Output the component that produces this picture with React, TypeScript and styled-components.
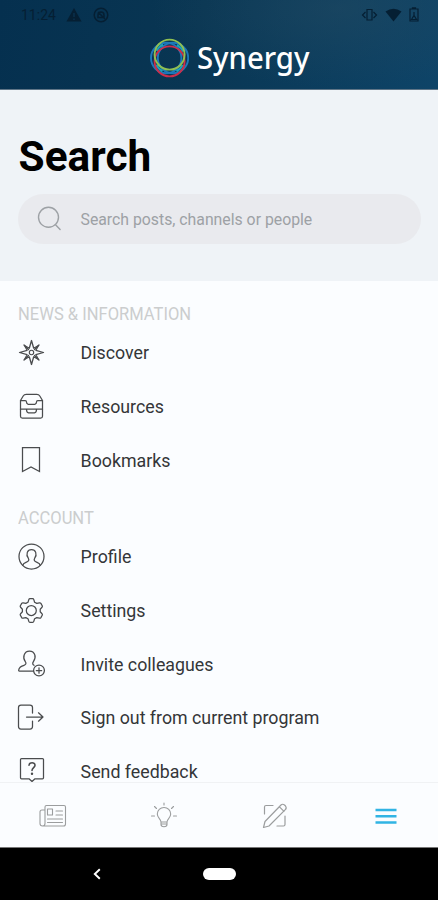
import React from "react";
import styled, { createGlobalStyle } from "styled-components";

const GlobalStyle = createGlobalStyle`
  * { box-sizing: border-box; }
  html, body { margin: 0; padding: 0; }
  body { font-family: Roboto, "Liberation Sans", sans-serif; background: #000; }
  svg { display: block; flex: none; }
`;

const Screen = styled.div`
  width: 100%;
  height: 900px;
  display: flex;
  flex-direction: column;
  overflow: hidden;
  background: #fbfdff;
`;

const Header = styled.header`
  height: 90px;
  flex: none;
  border-bottom: 1px solid #5f7587;
  background: radial-gradient(ellipse 190px 80px at 340px 8px, rgba(36, 75, 98, 0.5), rgba(36, 75, 98, 0)),
    linear-gradient(100deg, #05304f 0%, #093653 45%, #0e4468 100%);
`;

const StatusBar = styled.div`
  height: 29px;
  display: flex;
  justify-content: space-between;
  padding: 0 19px 0 21px;
  color: #051f33;
`;

const StatusGroup = styled.div<{ $gap: number }>`
  display: flex;
  align-items: center;
  gap: ${(p) => p.$gap}px;
`;

const Clock = styled.span`
  width: 34px;
  font-size: 14px;
  white-space: nowrap;
`;

const Brand = styled.div`
  height: 58px;
  display: flex;
  align-items: center;
  padding-left: 149px;
  gap: 8px;
`;

const BrandName = styled.span`
  font-family: "Noto Sans", "Open Sans", sans-serif;
  font-size: 31.5px;
  line-height: 40px;
  font-weight: 500;
  color: #fff;
  transform: translateY(-1px) scaleX(0.93);
  transform-origin: left center;
`;

const SearchPanel = styled.section`
  height: 191px;
  flex: none;
  padding: 42px 17px 0 18px;
  background: #eff3f7;
`;

const Title = styled.h1`
  margin: 0;
  padding-left: 0.6px;
  font-size: 42.4px;
  line-height: 50px;
  font-weight: 700;
  color: #000;
`;

const SearchField = styled.div`
  height: 50px;
  margin-top: 12px;
  display: flex;
  align-items: center;
  gap: 18.5px;
  padding-left: 18px;
  border-radius: 25px;
  background: #e9eaee;
  color: #9da1a5;
  font-size: 15.8px;
`;

const SearchHint = styled.span`
  line-height: 20px;
  padding-top: 2px;
`;

const Menu = styled.main`
  flex: 1;
  min-height: 0;
  overflow: hidden;
  display: flex;
  flex-direction: column;
  gap: 19.2px;
  padding-top: 21.2px;
`;

const Group = styled.section`
  flex: none;
`;

const GroupTitle = styled.h2`
  margin: 0 0 0 18px;
  height: 24px;
  font-size: 18.6px;
  line-height: 24px;
  font-weight: 400;
  color: #cbcdce;
  white-space: nowrap;
  transform: scaleX(0.89);
  transform-origin: left center;
`;

const MenuRow = styled.div`
  height: 53.6px;
  display: flex;
  align-items: center;
  gap: 35.6px;
  padding-left: 17px;
  color: #4a4c4e;
`;

const MenuLabel = styled.span`
  font-size: 17.8px;
  line-height: 24px;
  padding-top: 1px;
  color: #343638;
  white-space: nowrap;
`;

const TabBar = styled.nav`
  height: 65px;
  flex: none;
  display: grid;
  grid-template-columns: repeat(4, 111px);
  margin-left: -3px;
  padding-top: 2px;
  border-top: 1px solid #f0f2f4;
  background: #fbfdff;
`;

const Tab = styled.div<{ $active?: boolean }>`
  display: flex;
  align-items: center;
  justify-content: center;
  color: ${(p) => (p.$active ? "#31b4e4" : "#9b9d9e")};
`;

const SystemBar = styled.footer`
  height: 53px;
  flex: none;
  display: grid;
  grid-template-columns: 194px 50px 194px;
  align-items: center;
  justify-items: center;
  border-top: 1px solid #777;
  background: #000;
`;

const HomePill = styled.div`
  width: 33px;
  height: 12px;
  border-radius: 6px;
  background: #fff;
`;

const LineIcon = ({ children, size = 28, width = 1.25 }: { children: React.ReactNode; size?: number; width?: number }) => (
  <svg width={size} height={size} viewBox={`0 0 ${size} ${size}`} fill="none" stroke="currentColor" strokeWidth={width} strokeLinecap="round" strokeLinejoin="round">
    {children}
  </svg>
);

const CompassStar = () => (
  <LineIcon width={1.3}>
    <path d="M14.5 1.500 16.700 9.200 21.500 6.500 18.900 11.300 26.500 13.500 18.900 15.700 21.500 20.500 16.700 17.800 14.500 25.500 12.300 17.800 7.500 20.500 10.100 15.700 2.500 13.500 10.100 11.300 7.500 6.500 12.300 9.200Z" />
    <path d="m7 6 4.500 4.500M22 6l-4.500 4.500M7 21l4.500-4.500M22 21l-4.500-4.500" strokeWidth="1.300" />
    <circle cx="14.500" cy="13.500" r="2.200" strokeWidth="1.100" />
  </LineIcon>
);

const Drawer = () => (
  <LineIcon>
    <path d="M3.500 7.500v15.700q0 1.800 1.800 1.800h18.400q1.800 0 1.800-1.800V7.500L22.800 3q-1-1.700-3-1.700H9.200Q7.200 1.300 6.200 3Z" />
    <path d="M3.500 7.500h4.700q1.300 0 1.300 1.500t1.500 2.300h7q1.500-.8 1.500-2.300t1.300-1.500h4.700" />
    <path d="M3.500 16.200h22M9.500 16.500q0 3 2 3.300h6q2-.3 2-3.300" />
  </LineIcon>
);

const Bookmark = () => (
  <LineIcon>
    <path d="M5.500 1.500h17v24L14 21 5.500 25.500Z" strokeLinejoin="miter" />
  </LineIcon>
);

const Profile = () => (
  <LineIcon>
    <circle cx="14.500" cy="13.500" r="12.500" />
    <path d="M5.800 22.300c.5-2.800 3.500-2.600 5.200-4 .9-.8 1.200-1.800.3-3.100-1.400-1.800-1.700-3.800-1-5.800.6-1.700 2.200-2.800 4.200-2.800s3.600 1.100 4.200 2.800c.7 2 .4 4-1 5.800-.9 1.300-.6 2.300.3 3.100 1.700 1.400 4.700 1.200 5.200 4" />
  </LineIcon>
);

const Gear = () => (
  <LineIcon>
    <path d="M13 1.600h2.600q.9 0 1.200 1l.8 2.600 2.200 1.200 2.600-.6q1-.2 1.500.6l1.300 2.300q.5.800-.2 1.600L23.200 12.200v2.600l1.800 1.900q.7.800.2 1.600l-1.300 2.300q-.5.800-1.500.6l-2.600-.6-2.200 1.200-.8 2.600q-.3 1-1.200 1H13q-.9 0-1.200-1L11 21.800l-2.200-1.200-2.600.6q-1 .2-1.500-.6l-1.300-2.300q-.5-.8.2-1.600l1.800-1.900v-2.600L3.600 10.300q-.7-.8-.2-1.600L4.700 6.400q.5-.8 1.500-.6l2.600.6L11 5.200l.8-2.600q.3-1 1.200-1Z" />
    <circle cx="14.300" cy="13.500" r="5" />
  </LineIcon>
);

const Invite = () => (
  <LineIcon>
    <path d="M16.500 21.200H2.500Q1.300 21.200 1.800 19.500C2.400 17 4.500 16 7 15.300c2-.6 2.500-2 1.300-3.600C6.500 9.300 6.500 6.800 7.200 4.800 8 2.300 10 1 12.500 1s4.500 1.300 5.300 3.800c.7 2 .2 4.500-1.400 6.900-1.100 1.600-.8 2.700.6 3.600" />
    <circle cx="22" cy="20.500" r="5.400" />
    <path d="M22 17.800v5.400M19.300 20.500h5.400" />
  </LineIcon>
);

const SignOut = () => (
  <LineIcon>
    <path d="M15.500 9V3.500q0-2.500-2.500-2.500H4Q1.500 1 1.500 3.500v19Q1.500 25 4 25h9q2.500 0 2.500-2.500V17" />
    <path d="M9.500 13h16.500M21.500 8.800l4.500 4.200-4.500 4.200" />
  </LineIcon>
);

const Feedback = () => (
  <LineIcon>
    <path d="M4.500 1.500h21Q26.500 1.500 26.500 2.500v18.300Q26.500 21.800 25.500 21.800h-7.500L15 24.500 12 21.800H4.500q-1 0-1-1V2.500Q3.500 1.500 4.500 1.500Z" />
    <path d="M12 8.300c.2-3.400 6-3.500 6 0 0 2.200-3 2.500-3 5.200" strokeWidth="1.600" />
    <circle cx="15" cy="16.800" r=".6" fill="currentColor" />
  </LineIcon>
);

const News = () => (
  <LineIcon width={1.1}>
    <path d="M4 24H24.500q2 0 2-2V5q0-1.500-1.500-1.500H7.500Q6 3.500 6 5v16.500Q6 24 3.500 24 1 24 1 21.500V10q0-2 2-2h3" />
    <path d="M8.500 7h5v6h-5ZM17 9h6.500M17 13h6.500M8.500 17h15M8.500 20.500h15" />
  </LineIcon>
);

const Idea = () => (
  <LineIcon width={1.1}>
    <path d="M11 20c0-3-3.700-4-3.700-8 0-3.800 3-6.500 6.700-6.500s6.700 2.700 6.700 6.500c0 4-3.700 5-3.700 8ZM11 20v2.500q0 2.200 3 2.200t3-2.200V20M11 22h6M14 1v2M4.500 4.500l2 2M23.500 4.500l-2 2M1.500 14H4.500M23.500 14h3" />
  </LineIcon>
);

const Compose = () => (
  <LineIcon width={1.2}>
    <path d="M12 3.500H5q-1.500 0-1.500 1.500v7M16 24h6.500q1.500 0 1.500-1.500V14" />
    <path d="M2.500 25.500 4 19.500 20 3q1.500-1.500 3.500 0l1 1q1.500 2-.2 3.700L8 24ZM18.500 4.800l4.500 4.500" />
  </LineIcon>
);

const Burger = () => (
  <svg width="22" height="17" viewBox="0 0 22 17" fill="currentColor">
    <path d="M.5.800h21v2.500H.5zM.5 7h21v2.600H.5zM.5 13.300h21v2.500H.5z" />
  </svg>
);

const BrandRing = () => (
  <svg width="40" height="40" viewBox="0 0 40 40" fill="none" strokeWidth="1.900">
    <circle cx="17.200" cy="20" r="15.200" stroke="#1d78ba" />
    <circle cx="24" cy="20" r="15.200" stroke="#1d78ba" />
    <circle cx="20.600" cy="20" r="15" stroke="#1ca3ba" strokeWidth="2.200" strokeDasharray="9 14.560" strokeDashoffset="-7.300" />
    <circle cx="20.600" cy="23.400" r="15" stroke="#cb2e4b" />
    <circle cx="20.600" cy="16.600" r="15" stroke="#8fc052" />
  </svg>
);

const SearchGlyph = () => (
  <LineIcon size={26} width={1.400}>
    <circle cx="12.500" cy="11.300" r="10" />
    <path d="m19.300 18.500 4.800 5" />
  </LineIcon>
);

const groups = [
  {
    title: "NEWS & INFORMATION",
    rows: [
      { label: "Discover", Icon: CompassStar },
      { label: "Resources", Icon: Drawer },
      { label: "Bookmarks", Icon: Bookmark },
    ],
  },
  {
    title: "ACCOUNT",
    rows: [
      { label: "Profile", Icon: Profile },
      { label: "Settings", Icon: Gear },
      { label: "Invite colleagues", Icon: Invite },
      { label: "Sign out from current program", Icon: SignOut },
      { label: "Send feedback", Icon: Feedback },
    ],
  },
];

export default function App() {
  return (
    <>
      <GlobalStyle />
      <Screen>
        <Header>
          <StatusBar>
            <StatusGroup $gap={10}>
              <Clock>11:24</Clock>
              <svg width="18" height="16" viewBox="0 0 18 16">
                <path d="m9 1 7.500 13.500h-15Z" fill="currentColor" />
                <path d="M9 6v4M9 11.500v1.500" stroke="#0b3452" strokeWidth="1.300" />
              </svg>
              <svg width="16" height="16" viewBox="0 0 16 16" fill="none" stroke="currentColor" strokeWidth="1.500">
                <circle cx="8" cy="8" r="6.800" />
                <path d="M5 10.500V8a3 3 0 0 1 6 0v2.500ZM5 5l7 7" />
              </svg>
            </StatusGroup>
            <StatusGroup $gap={7}>
              <svg width="17" height="14" viewBox="0 0 17 14" fill="none" stroke="currentColor" strokeWidth="1.200">
                <path d="M6 1.500h5v10.500H6ZM4.500 4 1.500 7l3 3M12.500 4l3 3-3 3" />
              </svg>
              <svg width="17" height="14" viewBox="0 0 17 14" fill="currentColor">
                <path d="M.5 3.500Q8.500-2 16.500 3.500L8.500 13.500Z" />
              </svg>
              <svg width="10" height="15" viewBox="0 0 10 15" fill="none" stroke="currentColor" strokeWidth="1.200">
                <path d="M3.500 2V.8h3V2M1 2h8v12H1ZM5 5v4M2.500 12.500 5 8.500l2.500 4Z" />
              </svg>
            </StatusGroup>
          </StatusBar>
          <Brand>
            <BrandRing />
            <BrandName>Synergy</BrandName>
          </Brand>
        </Header>
        <SearchPanel>
          <Title>Search</Title>
          <SearchField>
            <SearchGlyph />
            <SearchHint>Search posts, channels or people</SearchHint>
          </SearchField>
        </SearchPanel>
        <Menu>
          {groups.map((group) => (
            <Group key={group.title}>
              <GroupTitle>{group.title}</GroupTitle>
              {group.rows.map(({ label, Icon }) => (
                <MenuRow key={label}>
                  <Icon />
                  <MenuLabel>{label}</MenuLabel>
                </MenuRow>
              ))}
            </Group>
          ))}
        </Menu>
        <TabBar>
          <Tab><News /></Tab>
          <Tab><Idea /></Tab>
          <Tab><Compose /></Tab>
          <Tab $active><Burger /></Tab>
        </TabBar>
        <SystemBar>
          <svg width="8" height="12" viewBox="0 0 8 12" fill="none" stroke="#fff" strokeWidth="1.900">
            <path d="M6.800 1.200 1.800 6l5 4.800" />
          </svg>
          <HomePill />
        </SystemBar>
      </Screen>
    </>
  );
}
